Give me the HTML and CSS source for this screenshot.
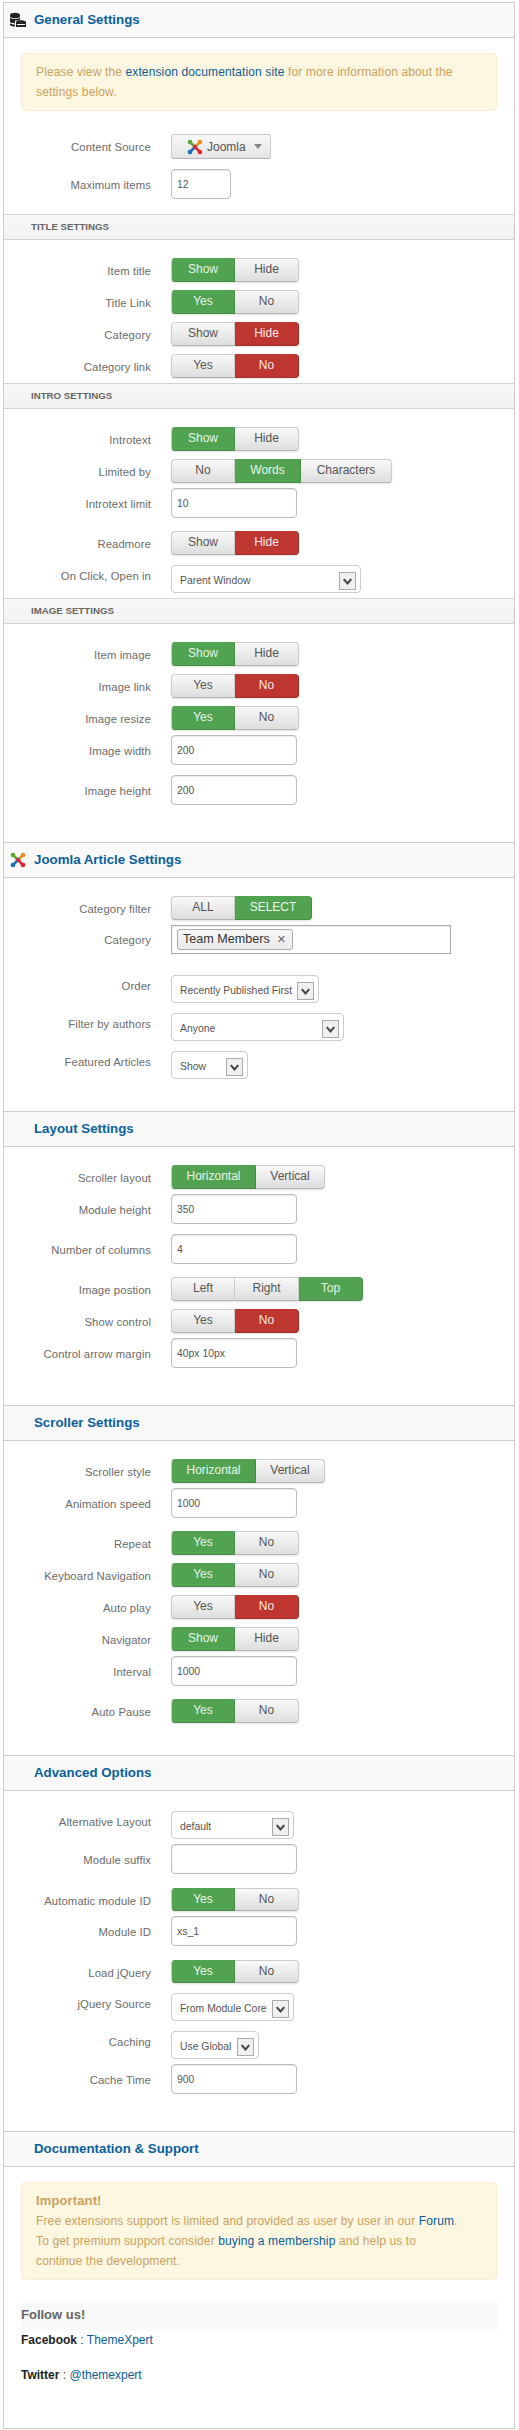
FILE: index.html
```html
<!DOCTYPE html>
<html lang="en">
<head>
    <meta charset="UTF-8">
    <meta name="viewport" content="width=device-width, initial-scale=1.0">
    <title>Module Settings</title>
    <link rel="stylesheet" href="styles.css">
</head>
<body>
    <svg class="defs" width="0" height="0" aria-hidden="true">
        <symbol id="joomla" viewBox="0 0 16 16">
            <g fill="none" stroke-width="2.7">
                <path d="M9.500 9.500L3.600 3.600" stroke="#5ba839"/>
                <path d="M6.500 9.500l5.900-5.900" stroke="#f28c1e"/>
                <path d="M9.500 6.500l-5.900 5.900" stroke="#1c6fb8"/>
                <path d="M6.500 6.500l5.900 5.900" stroke="#e3262e"/>
            </g>
            <circle cx="3" cy="3" r="2.300" fill="#5ba839"/>
            <circle cx="13" cy="3" r="2.300" fill="#f28c1e"/>
            <circle cx="3" cy="13" r="2.300" fill="#1c6fb8"/>
            <circle cx="13" cy="13" r="2.300" fill="#e3262e"/>
        </symbol>
        <symbol id="chevron" viewBox="0 0 16 16">
            <path d="M4 6l4 4.500L12 6" fill="none" stroke="#444" stroke-width="2.200"/>
        </symbol>
    </svg>

    <div class="panel">
        <h3 class="heading">
            <svg class="heading-icon" viewBox="0 0 16 16">
                <g fill="#222">
                    <path d="M0 3c0-3 10-3 10 0v1.400c0 2.400-10 2.400-10 0z"/>
                    <path d="M0 5.800c1.500 1.600 8.500 1.600 10 0v2c-.6.300-1.200.600-2 .8H5v2.800c-2 0-5-.5-5-1.800V8.300z"/>
                    <path d="M0 11.200c1 .8 3 1.200 5 1.300v2c-2 0-5-.6-5-1.800z"/>
                    <path d="M6 10c.5-2.500 9-2.500 10 0v5H6z"/>
                </g>
                <path d="M7 12.500h8" stroke="#fff" stroke-width="1"/>
            </svg>
            General Settings
        </h3>
        <div class="section section-first">
            <div class="alert">Please view the <a href="#">extension documentation site</a> for more information about the settings below.</div>
            <div class="row row-dropdown">
                <label>Content Source</label>
                <span class="dropdown"><svg class="dropdown-logo"><use href="#joomla"/></svg>Joomla<i class="caret"></i></span>
            </div>
            <div class="row row-input">
                <label>Maximum items</label>
                <input class="input input-mini" type="text" value="12">
            </div>
        </div>

        <h4 class="subheading">Title Settings</h4>
        <div class="section">
            <div class="row row-toggle">
                <label>Item title</label>
                <div class="toggle"><span class="on">Show</span><span>Hide</span></div>
            </div>
            <div class="row row-toggle">
                <label>Title Link</label>
                <div class="toggle"><span class="on">Yes</span><span>No</span></div>
            </div>
            <div class="row row-toggle">
                <label>Category</label>
                <div class="toggle"><span>Show</span><span class="off">Hide</span></div>
            </div>
            <div class="row row-toggle">
                <label>Category link</label>
                <div class="toggle"><span>Yes</span><span class="off">No</span></div>
            </div>
        </div>

        <h4 class="subheading">Intro Settings</h4>
        <div class="section">
            <div class="row row-toggle">
                <label>Introtext</label>
                <div class="toggle"><span class="on">Show</span><span>Hide</span></div>
            </div>
            <div class="row row-toggle">
                <label>Limited by</label>
                <div class="toggle"><span>No</span><span class="on btn-words">Words</span><span class="btn-chars">Characters</span></div>
            </div>
            <div class="row row-input">
                <label>Introtext limit</label>
                <input class="input" type="text" value="10">
            </div>
            <div class="row row-toggle">
                <label>Readmore</label>
                <div class="toggle"><span>Show</span><span class="off">Hide</span></div>
            </div>
            <div class="row row-select">
                <label>On Click, Open in</label>
                <div class="select select-open">Parent Window<svg class="select-arrow"><use href="#chevron"/></svg></div>
            </div>
        </div>

        <h4 class="subheading">Image Settings</h4>
        <div class="section section-main">
            <div class="row row-toggle">
                <label>Item image</label>
                <div class="toggle"><span class="on">Show</span><span>Hide</span></div>
            </div>
            <div class="row row-toggle">
                <label>Image link</label>
                <div class="toggle"><span>Yes</span><span class="off">No</span></div>
            </div>
            <div class="row row-toggle">
                <label>Image resize</label>
                <div class="toggle"><span class="on">Yes</span><span>No</span></div>
            </div>
            <div class="row row-input">
                <label>Image width</label>
                <input class="input" type="text" value="200">
            </div>
            <div class="row row-input">
                <label>Image height</label>
                <input class="input" type="text" value="200">
            </div>
        </div>

        <h3 class="heading heading-next">
            <svg class="heading-icon"><use href="#joomla"/></svg>
            Joomla Article Settings
        </h3>
        <div class="section section-main">
            <div class="row row-toggle">
                <label>Category filter</label>
                <div class="toggle"><span>ALL</span><span class="on btn-select">SELECT</span></div>
            </div>
            <div class="row row-tags">
                <label>Category</label>
                <div class="tags"><span class="tag">Team Members<b class="tag-close">&#10005;</b></span></div>
            </div>
            <div class="row row-select">
                <label>Order</label>
                <div class="select select-order">Recently Published First<svg class="select-arrow"><use href="#chevron"/></svg></div>
            </div>
            <div class="row row-select">
                <label>Filter by authors</label>
                <div class="select select-authors">Anyone<svg class="select-arrow"><use href="#chevron"/></svg></div>
            </div>
            <div class="row row-select">
                <label>Featured Articles</label>
                <div class="select select-featured">Show<svg class="select-arrow"><use href="#chevron"/></svg></div>
            </div>
        </div>

        <h3 class="heading heading-next heading-plain">Layout Settings</h3>
        <div class="section section-main">
            <div class="row row-toggle">
                <label>Scroller layout</label>
                <div class="toggle"><span class="on btn-horizontal">Horizontal</span><span class="btn-vertical">Vertical</span></div>
            </div>
            <div class="row row-input">
                <label>Module height</label>
                <input class="input" type="text" value="350">
            </div>
            <div class="row row-input">
                <label>Number of columns</label>
                <input class="input" type="text" value="4">
            </div>
            <div class="row row-toggle">
                <label>Image postion</label>
                <div class="toggle"><span>Left</span><span>Right</span><span class="on">Top</span></div>
            </div>
            <div class="row row-toggle">
                <label>Show control</label>
                <div class="toggle"><span>Yes</span><span class="off">No</span></div>
            </div>
            <div class="row row-input">
                <label>Control arrow margin</label>
                <input class="input" type="text" value="40px 10px">
            </div>
        </div>

        <h3 class="heading heading-next heading-plain">Scroller Settings</h3>
        <div class="section section-main">
            <div class="row row-toggle">
                <label>Scroller style</label>
                <div class="toggle"><span class="on btn-horizontal">Horizontal</span><span class="btn-vertical">Vertical</span></div>
            </div>
            <div class="row row-input">
                <label>Animation speed</label>
                <input class="input" type="text" value="1000">
            </div>
            <div class="row row-toggle">
                <label>Repeat</label>
                <div class="toggle"><span class="on">Yes</span><span>No</span></div>
            </div>
            <div class="row row-toggle">
                <label>Keyboard Navigation</label>
                <div class="toggle"><span class="on">Yes</span><span>No</span></div>
            </div>
            <div class="row row-toggle">
                <label>Auto play</label>
                <div class="toggle"><span>Yes</span><span class="off">No</span></div>
            </div>
            <div class="row row-toggle">
                <label>Navigator</label>
                <div class="toggle"><span class="on">Show</span><span>Hide</span></div>
            </div>
            <div class="row row-input">
                <label>Interval</label>
                <input class="input" type="text" value="1000">
            </div>
            <div class="row row-toggle">
                <label>Auto Pause</label>
                <div class="toggle"><span class="on">Yes</span><span>No</span></div>
            </div>
        </div>

        <h3 class="heading heading-next heading-plain">Advanced Options</h3>
        <div class="section section-main section-advanced">
            <div class="row row-select">
                <label>Alternative Layout</label>
                <div class="select select-layout">default<svg class="select-arrow"><use href="#chevron"/></svg></div>
            </div>
            <div class="row row-input">
                <label>Module suffix</label>
                <input class="input" type="text" value="">
            </div>
            <div class="row row-toggle">
                <label>Automatic module ID</label>
                <div class="toggle"><span class="on">Yes</span><span>No</span></div>
            </div>
            <div class="row row-input">
                <label>Module ID</label>
                <input class="input" type="text" value="xs_1">
            </div>
            <div class="row row-toggle">
                <label>Load jQuery</label>
                <div class="toggle"><span class="on">Yes</span><span>No</span></div>
            </div>
            <div class="row row-select">
                <label>jQuery Source</label>
                <div class="select select-layout">From Module Core<svg class="select-arrow"><use href="#chevron"/></svg></div>
            </div>
            <div class="row row-select">
                <label>Caching</label>
                <div class="select select-caching">Use Global<svg class="select-arrow"><use href="#chevron"/></svg></div>
            </div>
            <div class="row row-input">
                <label>Cache Time</label>
                <input class="input" type="text" value="900">
            </div>
        </div>

        <h3 class="heading heading-next heading-plain">Documentation &amp; Support</h3>
        <div class="section section-support">
            <div class="alert alert-support">
                <strong>Important!</strong><br>
                Free extensions support is limited and provided as user by user in our <a href="#">Forum</a>.<br>
                To get premium support consider <a href="#">buying a membership</a> and help us to<br>
                continue the development.
            </div>
            <h4 class="follow-title">Follow us!</h4>
            <p class="follow-line"><strong>Facebook</strong> : <a href="#">ThemeXpert</a></p>
            <p class="follow-line"><strong>Twitter</strong> : <a href="#">@themexpert</a></p>
        </div>
    </div>
</body>
</html>
```

FILE: styles.css
```css
body {
    font-family: "Liberation Sans", Arial, sans-serif;
    font-size: 12px;
    background-color: #fff;
    color: #555;
    margin: 0;
    padding: 2px 4px 0 3px;
}
a {
    color: #0b5c94;
    text-decoration: none;
}
.defs {
    position: absolute;
}
.panel {
    border: 1px solid #ccc;
}
.heading {
    display: flex;
    align-items: center;
    height: 34px;
    margin: 0;
    padding-left: 6px;
    background-color: #f9f9f9;
    border-bottom: 1px solid #ccc;
    color: #0b5f9c;
    font-size: 13.3px;
    line-height: 20px;
}
.heading-next {
    border-top: 1px solid #ccc;
}
.heading-plain {
    padding-left: 30px;
}
.heading-icon {
    width: 16px;
    height: 16px;
    margin-right: 8px;
    flex-shrink: 0;
}
.subheading {
    height: 26px;
    margin: 0;
    padding-left: 27px;
    box-sizing: border-box;
    background: linear-gradient(#f8f8f8, #f1f1f1);
    border-top: 1px solid #d4d4d4;
    border-bottom: 1px solid #d4d4d4;
    color: #666;
    font-size: 9.7px;
    line-height: 24px;
    text-transform: uppercase;
}
.section {
    padding: 18px 17px 5px;
}
.section-first {
    padding-top: 15px;
    padding-bottom: 10px;
}
.section-main {
    padding-bottom: 32px;
}
.section-advanced {
    padding-top: 20px;
}
.section-support {
    padding-top: 15px;
    padding-bottom: 27px;
}
.alert {
    margin-bottom: 23px;
    padding: 8px 20px 8px 14px;
    background-color: #fdf6e0;
    border: 1px solid #fbeed5;
    border-radius: 4px;
    color: #c9a25e;
    letter-spacing: 0.13px;
    line-height: 20px;
}
.alert-support {
    margin-bottom: 21px;
}
.alert strong {
    font-size: 13px;
}
.row {
    display: flex;
    align-items: flex-start;
}
.row-input:last-child {
    margin-bottom: 5px;
}
.row label {
    width: 130px;
    margin-right: 20px;
    color: #6b6b6b;
    font-size: 11.3px;
    letter-spacing: 0.1px;
    line-height: 18px;
    text-align: right;
    flex-shrink: 0;
}
.row-toggle label,
.row-dropdown label {
    padding-top: 4px;
}
.row-input label {
    padding-top: 7px;
}
.row-select label {
    padding-top: 2px;
}
.row-tags label {
    padding-top: 6px;
}

/* gaps between rows depend on which controls meet */
.row-toggle + .row-toggle {
    margin-top: 8px;
}
.row-toggle + .row-input,
.row-select + .row-input,
.row-toggle + .row-tags {
    margin-top: 5px;
}
.row-input + .row-toggle {
    margin-top: 13px;
}
.row-input + .row-input,
.row-dropdown + .row-input,
.row-toggle + .row-select,
.row-select + .row-select {
    margin-top: 10px;
}
.row-tags + .row-select {
    margin-top: 21px;
}

.dropdown {
    display: flex;
    align-items: center;
    width: 100px;
    height: 25px;
    box-sizing: border-box;
    padding-left: 15px;
    background: linear-gradient(#f8f8f8, #e4e4e4);
    border: 1px solid #ccc;
    border-bottom-color: #b3b3b3;
    border-radius: 3px;
    color: #555;
    font-size: 12px;
}
.dropdown-logo {
    width: 16px;
    height: 16px;
    margin-right: 4px;
}
.caret {
    width: 0;
    height: 0;
    margin-left: 8px;
    border: 4px solid transparent;
    border-top: 5px solid #888;
    border-bottom: 0;
}
.input {
    width: 126px;
    height: 30px;
    box-sizing: border-box;
    padding: 0 5px;
    background-color: #fff;
    border: 1px solid #bbb;
    border-radius: 4px;
    box-shadow: inset 0 1px 1px rgba(0, 0, 0, 0.08);
    color: #555;
    font-family: inherit;
    font-size: 10.4px;
}
.input-mini {
    width: 60px;
}
.toggle {
    display: flex;
    height: 24px;
    box-shadow: 0 1px 2px rgba(0, 0, 0, 0.12);
    border-radius: 4px;
}
.toggle span {
    width: 64px;
    height: 24px;
    box-sizing: border-box;
    background: linear-gradient(#f8f8f8, #dedede);
    border: 1px solid #ccc;
    border-left: 0;
    border-bottom-color: #b3b3b3;
    color: #555;
    line-height: 21px;
    text-align: center;
}
.toggle span:first-child {
    border-left: 1px solid #ccc;
    border-radius: 4px 0 0 4px;
}
.toggle span:last-child {
    border-radius: 0 4px 4px 0;
}
.toggle .on {
    background: #51a351;
    border-color: #458b45;
    border-top-color: #51a351;
    color: #e8f5e8;
}
.toggle .off {
    background: #bd362f;
    border-color: #a32e28;
    border-top-color: #bd362f;
    color: #fbeaea;
}
.toggle .btn-words {
    width: 66px;
}
.toggle .btn-chars {
    width: 91px;
}
.toggle .btn-select {
    width: 77px;
}
.toggle .btn-horizontal {
    width: 85px;
}
.toggle .btn-vertical {
    width: 69px;
}
.section-advanced .toggle,
.section-advanced .toggle span {
    height: 23px;
}
.section-advanced .row-input + .row-toggle {
    margin-top: 14px;
}
.tags {
    width: 280px;
    height: 29px;
    box-sizing: border-box;
    padding: 3px 5px;
    border: 1px solid #aaa;
    box-shadow: inset 0 1px 2px rgba(0, 0, 0, 0.08);
}
.tag {
    display: inline-block;
    width: 116px;
    height: 21px;
    box-sizing: border-box;
    padding: 0 5px;
    background: linear-gradient(#f6f6f6, #ebebeb);
    border: 1px solid #aaa;
    border-radius: 3px;
    color: #333;
    font-size: 12.6px;
    line-height: 18px;
    white-space: nowrap;
}
.tag-close {
    margin-left: 7px;
    color: #666;
    font-family: "DejaVu Sans", sans-serif;
    font-size: 11px;
}
.select {
    display: flex;
    align-items: center;
    justify-content: space-between;
    height: 28px;
    box-sizing: border-box;
    padding: 2px 4px 0 8px;
    background-color: #fff;
    border: 1px solid #ccc;
    border-radius: 4px;
    color: #555;
    font-size: 10.4px;
}
.select-arrow {
    width: 17px;
    height: 18px;
    margin-top: 1px;
    background: #f0f0f0;
    border: 1px solid #aaa;
    box-sizing: border-box;
}
.select-open {
    width: 190px;
}
.select-order {
    width: 148px;
}
.select-authors {
    width: 173px;
}
.select-featured {
    width: 77px;
}
.select-layout {
    width: 123px;
}
.select-caching {
    width: 88px;
}
.follow-title {
    height: 30px;
    margin: 0;
    background-color: #f9f9f9;
    color: #666;
    font-size: 13px;
    line-height: 28px;
}
.follow-line {
    margin: 0 0 17px;
    color: #333;
    line-height: 18px;
}
.follow-line strong {
    color: #222;
}
```
